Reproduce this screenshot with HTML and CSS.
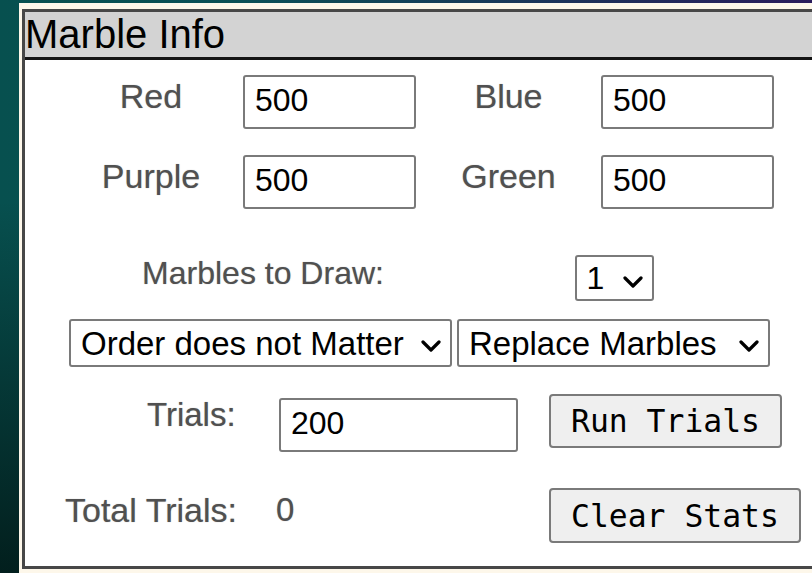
FILE: index.html
```html
<!DOCTYPE html>
<html lang="en">
<head>
<meta charset="utf-8">
<title>Marble Info</title>
<link rel="stylesheet" href="styles.css">
</head>
<body>
<div class="frame">
  <section class="panel">
    <h1 class="panel-title">Marble Info</h1>
    <div class="panel-body">
      <div class="color-row row-first">
        <label class="lbl" for="red">Red</label>
        <input class="num" id="red" type="text" value="500">
        <label class="lbl" for="blue">Blue</label>
        <input class="num" id="blue" type="text" value="500">
      </div>
      <div class="color-row row-second">
        <label class="lbl" for="purple">Purple</label>
        <input class="num" id="purple" type="text" value="500">
        <label class="lbl" for="green">Green</label>
        <input class="num" id="green" type="text" value="500">
      </div>

      <div class="draw-row">
        <label class="lbl" for="draw">Marbles to Draw:</label>
        <span class="pick pick-count">
          <select id="draw"><option>1</option><option>2</option><option>3</option></select>
          <svg class="chev" viewBox="0 0 20 12" width="20" height="12"><polyline points="2,2 10,10 18,2"/></svg>
        </span>
      </div>

      <div class="mode-row">
        <span class="pick pick-order">
          <select><option>Order does not Matter</option><option>Order Matters</option></select>
          <svg class="chev" viewBox="0 0 20 12" width="20" height="12"><polyline points="2,2 10,10 18,2"/></svg>
        </span>
        <span class="pick pick-replace">
          <select><option>Replace Marbles</option><option>Keep Marbles</option></select>
          <svg class="chev" viewBox="0 0 20 12" width="20" height="12"><polyline points="2,2 10,10 18,2"/></svg>
        </span>
      </div>

      <div class="run-row">
        <label class="lbl lbl-trials" for="trials">Trials:</label>
        <input class="num num-trials" id="trials" type="text" value="200">
        <button class="btn" type="button">Run Trials</button>
      </div>

      <div class="total-row">
        <span class="lbl lbl-total">Total Trials:</span>
        <span class="lbl total-value">0</span>
        <button class="btn btn-clear" type="button">Clear Stats</button>
      </div>
    </div>
  </section>
</div>
</body>
</html>
```

FILE: styles.css
```css
html, body {
  margin: 0;
  height: 100%;
}

body {
  overflow: hidden;
  font-family: "Liberation Sans", Arial, sans-serif;
  background:
    linear-gradient(to bottom, rgba(0, 0, 0, 0) 0%, rgba(0, 0, 0, 0) 35%, rgba(0, 10, 8, 0.7) 100%),
    linear-gradient(to right, #07504f 0%, #0a4f55 30%, #2a1c5c 100%);
}

/* cream window frame around the panel */
.frame {
  margin: 3px 0 0 19px;
  padding: 6px 0 4px 3px;
  background: #fdf7ea;
  width: 900px;
}

.panel {
  box-sizing: border-box;
  height: 560px;
  border: 3px solid #474747;
  background: #fff;
}

.panel-title {
  margin: 0;
  height: 45px;
  font-weight: normal;
  font-size: 40px;
  line-height: 45px;
  color: #000;
  background: #d3d3d3;
  border-bottom: 3px solid #141414;
}

.panel-body {
  display: flex;
  flex-direction: column;
}

.lbl {
  font-size: 33px;
  line-height: normal;
  color: #505050;
  text-shadow: 0 0 1px rgba(60, 60, 60, 0.45);
}

.num {
  box-sizing: border-box;
  height: 54px;
  margin: 0;
  padding: 4px 10px 8px;
  font: 32px "Liberation Sans", Arial, sans-serif;
  color: #000;
  background: #fff;
  border: 2px solid #7a7a7a;
  border-radius: 3px;
  outline: none;
}

/* Red / Blue and Purple / Green */
.color-row {
  display: grid;
  grid-template-columns: 184px 173px 185px 173px;
  padding-left: 34px;
  align-items: start;
}

.color-row .lbl {
  justify-self: center;
  padding-top: 2px;
  font-size: 34px;
}

.color-row .num {
  width: 173px;
}

.row-first { margin-top: 15px; }
.row-second { margin-top: 26px; }

/* selects with a drawn chevron */
.pick {
  position: relative;
  display: inline-block;
}

.pick select {
  appearance: none;
  -webkit-appearance: none;
  box-sizing: border-box;
  margin: 0;
  padding: 0 44px 0 10px;
  font: 33px "Liberation Sans", Arial, sans-serif;
  color: #000;
  background: #fff;
  border: 2px solid #7a7a7a;
  border-radius: 3px;
  outline: none;
}

.chev {
  position: absolute;
  right: 11px;
  top: calc(50% + 3px);
  transform: translateY(-50%);
  pointer-events: none;
}

.chev polyline {
  fill: none;
  stroke: #000;
  stroke-width: 3.2;
  stroke-linecap: round;
  stroke-linejoin: round;
}

.draw-row {
  display: grid;
  grid-template-columns: 476px 226px;
  align-items: start;
  margin-top: 46px;
}

.draw-row .lbl {
  justify-self: center;
  font-size: 32px;
}

.draw-row .pick {
  justify-self: center;
}

.pick-count select {
  width: 79px;
  height: 46px;
  font-size: 32px;
}

.pick-count .chev {
  top: calc(50% + 4px);
}

.mode-row {
  display: flex;
  gap: 5px;
  margin-top: 18px;
  padding-left: 44px;
}

.pick-order select {
  width: 383px;
  height: 48px;
}

.pick-replace select {
  width: 313px;
  height: 48px;
}

/* Trials and totals */
.run-row,
.total-row {
  display: grid;
  grid-template-columns: 251px 273px auto;
  align-items: start;
}

.run-row { margin-top: 27px; }
.total-row { margin-top: 36px; }

.lbl-trials {
  margin: 2px 0 0 122px;
}

.num-trials {
  width: 239px;
  margin: 4px 0 0 3px;
}

.lbl-total {
  margin: 3px 0 0 40px;
  font-size: 34px;
}

.total-value {
  margin-top: 3px;
  font-size: 33px;
}

.btn {
  justify-self: start;
  box-sizing: border-box;
  height: 54px;
  margin: 0;
  padding: 0 20px;
  font: 31.4px "DejaVu Sans Mono", "Liberation Mono", monospace;
  color: #000;
  background: #efefef;
  border: 2px solid #7a7a7a;
  border-radius: 4px;
}

.btn-clear {
  height: 55px;
}
```
